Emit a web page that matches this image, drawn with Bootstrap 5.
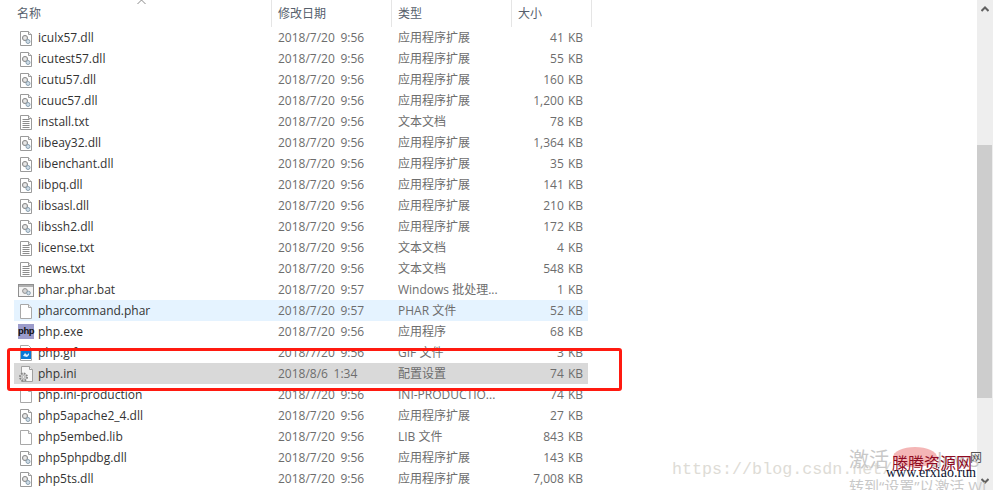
<!DOCTYPE html>
<html lang="zh-CN">

<head>
    <meta charset="UTF-8">
    <meta name="viewport" content="width=device-width, initial-scale=1.0">
    <title>php</title>
    <link href="https://cdn.jsdelivr.net/npm/bootstrap@5.3.0/dist/css/bootstrap.min.css" rel="stylesheet">
    <style>
        body {
            height: 490px;
            overflow: hidden;
            background: #fff;
            font-family: "Open Sans", "Noto Sans CJK SC", sans-serif;
            font-size: 12px;
            line-height: 21px;
            color: #6d6d6d;
        }

        .page-wrap { height: 490px; overflow: hidden; }
        .file-pane { width: 977px; }

        .head-row { height: 27px; padding-left: 15px; width: 592px; color: #56606c; }
        .head-cell { height: 27px; line-height: 27px; padding-top: 0; border-right: 1px solid #e5e5e5; padding-left: 2px; }
        .head-cell.c-date, .head-cell.c-type, .head-cell.c-size { padding-left: 6px; }
        .sort-arrow { left: 137px; top: -1px; }

        .file-row { height: 21px; margin-left: 14px; width: 574px; white-space: nowrap; }
        .file-row.is-hover { background: #e5f3ff; }
        .file-row.is-picked { background: #d9d9d9; }

        .c-name { width: 257px; }
        .c-date { width: 120px; }
        .c-type { width: 120px; }
        .c-size { width: 80px; }
        .file-row .c-date, .file-row .c-type { padding-left: 7px; }
        .file-row .c-date { width: 120px; word-spacing: 2.5px; }
        .file-row .c-type { width: 115px; }
        .file-row .c-size { width: 82px; text-align: right; padding-right: 5px; word-spacing: 1px; }

        .file-row .c-name { display: flex; align-items: center; color: #333; padding-left: 4px; }
        .file-ico { width: 16px; height: 16px; margin-right: 4px; flex: none; }
        .php-ico {
            width: 16px;
            height: 15px;
            margin-right: 4px;
            flex: none;
            background: #9c9ccb;
            color: #111;
            font-family: "Liberation Sans", sans-serif;
            font-size: 9.5px;
            font-weight: 700;
            line-height: 14px;
            letter-spacing: -.4px;
            text-align: center;
        }

        .scroll-rail { width: 16px; background: #eee; }
        .scroll-gap { height: 145px; }
        .scroll-thumb { height: 253px; width: 15px; background: #cdcdcd; }
        .rail-up { left: 4px; top: 6px; }
        .rail-down { left: 4px; top: 478px; }

        .red-frame {
            left: 7px;
            top: 348px;
            width: 615px;
            height: 43px;
            border: 3px solid #ff1a10;
            border-radius: 3px;
        }

        .mark-url {
            left: 672px;
            top: 457px;
            font-family: "Liberation Mono", monospace;
            font-size: 16.7px;
            line-height: 26px;
            color: #dedcd6;
            white-space: nowrap;
        }
        .mark-activate { left: 849px; top: 447px; font-size: 20px; line-height: 26px; color: #c8c8c8; white-space: nowrap; }
        .mark-activate2 { left: 849px; top: 478px; font-size: 15px; line-height: 16px; color: #c8c8c8; white-space: nowrap; }
        .mark-blob { left: 893px; top: 447px; width: 44px; height: 20px; border-radius: 50%; background: #f4b6b6; }
        .mark-site {
            left: 892px;
            top: 452px;
            font-family: "Noto Sans CJK SC", sans-serif;
            font-size: 16px;
            line-height: 20px;
            color: #8f0a22;
            white-space: nowrap;
        }
        .mark-wang {
            left: 970px;
            top: 450px;
            font-family: "Noto Sans CJK SC", sans-serif;
            font-size: 12px;
            line-height: 14px;
            color: #555;
        }
        .mark-www {
            left: 886px;
            top: 465px;
            font-family: "Liberation Serif", serif;
            font-size: 14px;
            line-height: 16px;
            color: #0c1430;
            white-space: nowrap;
        }
    </style>
</head>

<body>
    <svg width="0" height="0" class="position-absolute">
        <symbol id="i-dll" viewBox="0 0 16 16">
            <path d="M2.5 1.5h8l3 3v11h-11z" fill="#fff" stroke="#9a9a9a"/>
            <path d="M10.5 1.5v3h3" fill="#eee" stroke="#9a9a9a"/>
            <circle cx="7" cy="8" r="2.6" fill="#d6d6d6" stroke="#8f8f8f"/>
            <circle cx="7" cy="8" r=".8" fill="#fff"/>
            <circle cx="10" cy="11.5" r="2" fill="#cfdde8" stroke="#8aa0b0"/>
        </symbol>
        <symbol id="i-txt" viewBox="0 0 16 16">
            <path d="M2.5 1.5h8l3 3v11h-11z" fill="#fff" stroke="#9a9a9a"/>
            <path d="M10.5 1.5v3h3" fill="#eee" stroke="#9a9a9a"/>
            <path d="M4.5 5.5h7M4.5 7.5h7M4.5 9.5h7M4.5 11.5h7M4.5 13.5h7" stroke="#8c8c8c"/>
        </symbol>
        <symbol id="i-bat" viewBox="0 0 16 16">
            <rect x=".5" y="2.5" width="15" height="12" fill="#f4f4f4" stroke="#8f8f8f"/>
            <path d="M1 3h14v2H1z" fill="#b0b0b0"/>
            <circle cx="7" cy="9" r="2.4" fill="#d6d6d6" stroke="#8f8f8f"/>
            <circle cx="10.5" cy="11" r="1.8" fill="#cfdde8" stroke="#8aa0b0"/>
        </symbol>
        <symbol id="i-blank" viewBox="0 0 16 16">
            <path d="M2.5 1.5h8l3 3v11h-11z" fill="#fff" stroke="#a8a8a8"/>
            <path d="M10.5 1.5v3h3" fill="#f2f2f2" stroke="#a8a8a8"/>
        </symbol>
        <symbol id="i-gif" viewBox="0 0 16 16">
            <path d="M2.5 .5h8l3 3v12h-11z" fill="#fff" stroke="#a8a8a8"/>
            <rect x="3" y="6" width="10" height="8" fill="#0a78d6"/>
            <path d="M5 11l2-3 2 2 2-2v2l-2 2z" fill="#dcecfa"/>
        </symbol>
        <symbol id="i-ini" viewBox="0 0 16 16">
            <path d="M3.5 .5h8l3 3v12h-11z" fill="#f7f7f7" stroke="#a0a0a0"/>
            <path d="M11.5 .5v3h3" fill="#eee" stroke="#a0a0a0"/>
            <circle cx="5.5" cy="11" r="3.6" fill="#cfcfcf" stroke="#858585" stroke-width="1.8" stroke-dasharray="1.7 1.1"/>
            <circle cx="5.5" cy="11" r="1.4" fill="#eee" stroke="#9a9a9a" stroke-width=".6"/>
        </symbol>
    </svg>

    <div class="page-wrap d-flex position-relative">
        <div class="file-pane position-relative">
            <div class="head-row d-flex position-relative">
                <div class="head-cell c-name">名称</div>
                <div class="head-cell c-date">修改日期</div>
                <div class="head-cell c-type">类型</div>
                <div class="head-cell c-size">大小</div>
                <svg class="sort-arrow position-absolute" width="9" height="6" viewBox="0 0 9 6"><path d="M.5 5L4.5 1l4 4" fill="none" stroke="#8a8a8a"/></svg>
            </div>

            <div class="file-row d-flex"><div class="c-name"><svg class="file-ico"><use href="#i-dll"/></svg>iculx57.dll</div><div class="c-date">2018/7/20 9:56</div><div class="c-type">应用程序扩展</div><div class="c-size">41 KB</div></div>
            <div class="file-row d-flex"><div class="c-name"><svg class="file-ico"><use href="#i-dll"/></svg>icutest57.dll</div><div class="c-date">2018/7/20 9:56</div><div class="c-type">应用程序扩展</div><div class="c-size">55 KB</div></div>
            <div class="file-row d-flex"><div class="c-name"><svg class="file-ico"><use href="#i-dll"/></svg>icutu57.dll</div><div class="c-date">2018/7/20 9:56</div><div class="c-type">应用程序扩展</div><div class="c-size">160 KB</div></div>
            <div class="file-row d-flex"><div class="c-name"><svg class="file-ico"><use href="#i-dll"/></svg>icuuc57.dll</div><div class="c-date">2018/7/20 9:56</div><div class="c-type">应用程序扩展</div><div class="c-size">1,200 KB</div></div>
            <div class="file-row d-flex"><div class="c-name"><svg class="file-ico"><use href="#i-txt"/></svg>install.txt</div><div class="c-date">2018/7/20 9:56</div><div class="c-type">文本文档</div><div class="c-size">78 KB</div></div>
            <div class="file-row d-flex"><div class="c-name"><svg class="file-ico"><use href="#i-dll"/></svg>libeay32.dll</div><div class="c-date">2018/7/20 9:56</div><div class="c-type">应用程序扩展</div><div class="c-size">1,364 KB</div></div>
            <div class="file-row d-flex"><div class="c-name"><svg class="file-ico"><use href="#i-dll"/></svg>libenchant.dll</div><div class="c-date">2018/7/20 9:56</div><div class="c-type">应用程序扩展</div><div class="c-size">35 KB</div></div>
            <div class="file-row d-flex"><div class="c-name"><svg class="file-ico"><use href="#i-dll"/></svg>libpq.dll</div><div class="c-date">2018/7/20 9:56</div><div class="c-type">应用程序扩展</div><div class="c-size">141 KB</div></div>
            <div class="file-row d-flex"><div class="c-name"><svg class="file-ico"><use href="#i-dll"/></svg>libsasl.dll</div><div class="c-date">2018/7/20 9:56</div><div class="c-type">应用程序扩展</div><div class="c-size">210 KB</div></div>
            <div class="file-row d-flex"><div class="c-name"><svg class="file-ico"><use href="#i-dll"/></svg>libssh2.dll</div><div class="c-date">2018/7/20 9:56</div><div class="c-type">应用程序扩展</div><div class="c-size">172 KB</div></div>
            <div class="file-row d-flex"><div class="c-name"><svg class="file-ico"><use href="#i-txt"/></svg>license.txt</div><div class="c-date">2018/7/20 9:56</div><div class="c-type">文本文档</div><div class="c-size">4 KB</div></div>
            <div class="file-row d-flex"><div class="c-name"><svg class="file-ico"><use href="#i-txt"/></svg>news.txt</div><div class="c-date">2018/7/20 9:56</div><div class="c-type">文本文档</div><div class="c-size">548 KB</div></div>
            <div class="file-row d-flex"><div class="c-name"><svg class="file-ico"><use href="#i-bat"/></svg>phar.phar.bat</div><div class="c-date">2018/7/20 9:57</div><div class="c-type">Windows 批处理...</div><div class="c-size">1 KB</div></div>
            <div class="file-row d-flex is-hover"><div class="c-name"><svg class="file-ico"><use href="#i-blank"/></svg>pharcommand.phar</div><div class="c-date">2018/7/20 9:57</div><div class="c-type">PHAR 文件</div><div class="c-size">52 KB</div></div>
            <div class="file-row d-flex"><div class="c-name"><span class="php-ico">php</span>php.exe</div><div class="c-date">2018/7/20 9:56</div><div class="c-type">应用程序</div><div class="c-size">68 KB</div></div>
            <div class="file-row d-flex"><div class="c-name"><svg class="file-ico"><use href="#i-gif"/></svg>php.gif</div><div class="c-date">2018/7/20 9:56</div><div class="c-type">GIF 文件</div><div class="c-size">3 KB</div></div>
            <div class="file-row d-flex is-picked"><div class="c-name"><svg class="file-ico"><use href="#i-ini"/></svg>php.ini</div><div class="c-date">2018/8/6 1:34</div><div class="c-type">配置设置</div><div class="c-size">74 KB</div></div>
            <div class="file-row d-flex"><div class="c-name"><svg class="file-ico"><use href="#i-blank"/></svg>php.ini-production</div><div class="c-date">2018/7/20 9:56</div><div class="c-type">INI-PRODUCTIO...</div><div class="c-size">74 KB</div></div>
            <div class="file-row d-flex"><div class="c-name"><svg class="file-ico"><use href="#i-dll"/></svg>php5apache2_4.dll</div><div class="c-date">2018/7/20 9:56</div><div class="c-type">应用程序扩展</div><div class="c-size">27 KB</div></div>
            <div class="file-row d-flex"><div class="c-name"><svg class="file-ico"><use href="#i-blank"/></svg>php5embed.lib</div><div class="c-date">2018/7/20 9:56</div><div class="c-type">LIB 文件</div><div class="c-size">843 KB</div></div>
            <div class="file-row d-flex"><div class="c-name"><svg class="file-ico"><use href="#i-dll"/></svg>php5phpdbg.dll</div><div class="c-date">2018/7/20 9:56</div><div class="c-type">应用程序扩展</div><div class="c-size">143 KB</div></div>
            <div class="file-row d-flex"><div class="c-name"><svg class="file-ico"><use href="#i-dll"/></svg>php5ts.dll</div><div class="c-date">2018/7/20 9:56</div><div class="c-type">应用程序扩展</div><div class="c-size">7,008 KB</div></div>
        </div>

        <div class="scroll-rail position-relative">
            <div class="scroll-gap"></div>
            <div class="scroll-thumb"></div>
            <svg class="rail-up position-absolute" width="8" height="6" viewBox="0 0 8 6"><path d="M.5 5L4 1.5 7.5 5" fill="none" stroke="#606060" stroke-width="2"/></svg>
            <svg class="rail-down position-absolute" width="8" height="6" viewBox="0 0 8 6"><path d="M.5 1L4 4.5 7.5 1" fill="none" stroke="#606060" stroke-width="2"/></svg>
        </div>

        <div class="red-frame position-absolute"></div>
        <div class="mark-url position-absolute">https://blog.csdn.net/</div>
        <div class="mark-activate position-absolute">激活 Windows</div>
        <div class="mark-activate2 position-absolute">转到“设置”以激活 Wi</div>
        <div class="mark-blob position-absolute"></div>
        <div class="mark-site position-absolute">滕腾资源网</div>
        <div class="mark-wang position-absolute">网</div>
        <div class="mark-www position-absolute">www.erxiao.run</div>
    </div>

    <script src="https://cdn.jsdelivr.net/npm/bootstrap@5.3.0/dist/js/bootstrap.bundle.min.js"></script>
</body>

</html>
